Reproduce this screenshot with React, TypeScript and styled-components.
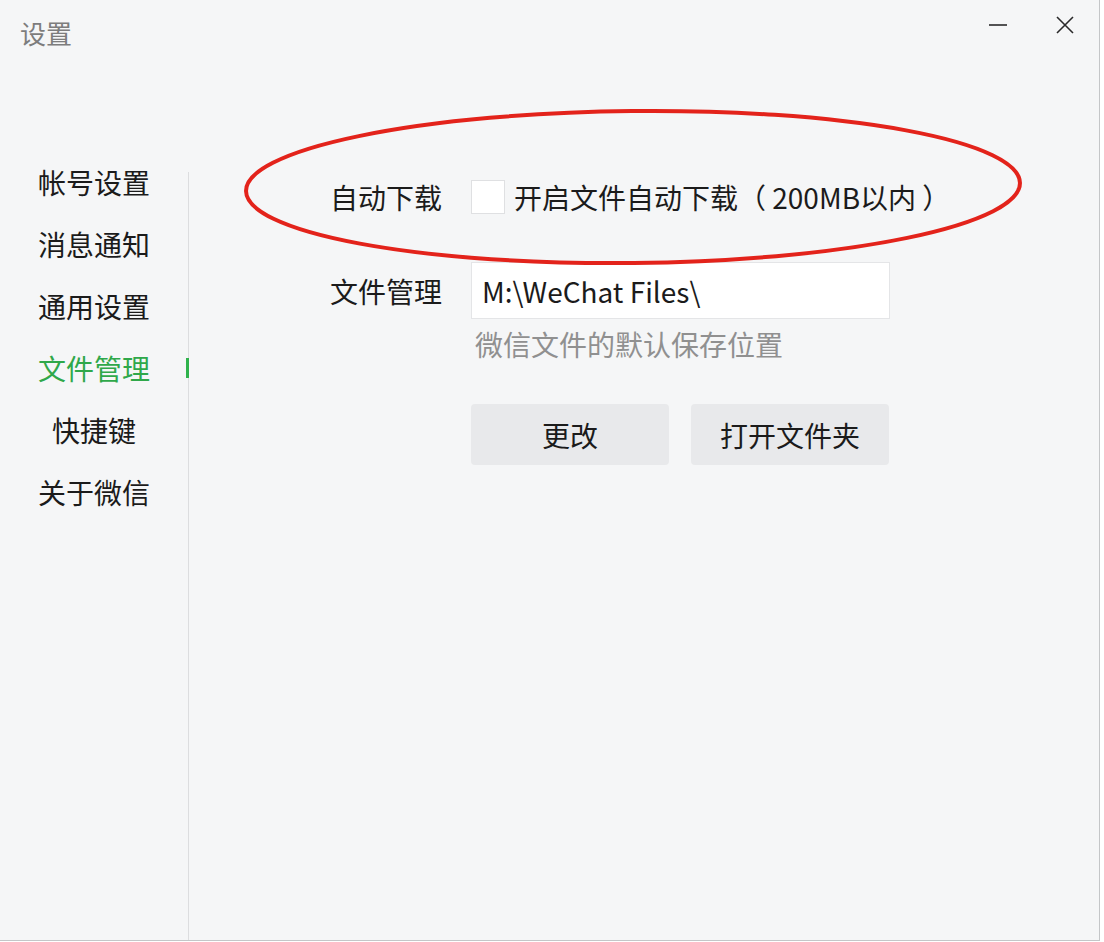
import React from "react";
import styled, { createGlobalStyle } from "styled-components";

const GlobalStyle = createGlobalStyle`
  html, body {
    margin: 0;
    padding: 0;
    background: #ffffff;
  }
  body {
    font-family: "Noto Sans CJK SC", "Noto Sans", sans-serif;
  }
`;

const Window = styled.div`
  position: relative;
  width: 1099px;
  height: 940px;
  background: #f5f6f7;
  border-right: 1px solid #c4c6c8;
  border-bottom: 1px solid #c4c6c8;
  display: flex;
  flex-direction: column;
  overflow: hidden;
`;

const TitleBar = styled.div`
  height: 151px;
  display: flex;
  justify-content: space-between;
  align-items: flex-start;
  flex-shrink: 0;
`;

const Title = styled.div`
  margin: 20px 0 0 20px;
  font-size: 26px;
  line-height: 26px;
  color: #7d7d7d;
`;

const Controls = styled.div`
  display: flex;
  align-items: center;
  gap: 35px;
  margin: 9px 18px 0 0;
`;

const ControlButton = styled.div`
  width: 32px;
  height: 32px;
  display: flex;
  align-items: center;
  justify-content: center;
`;

const Body = styled.div`
  flex: 1;
  display: flex;
`;

const Sidebar = styled.div`
  width: 188px;
  display: flex;
  flex-direction: column;
`;

const Divider = styled.div`
  width: 1px;
  margin-top: 21px;
  background: #dcdddf;
`;

const NavItem = styled.div<{ active?: boolean }>`
  position: relative;
  height: 62px;
  line-height: 62px;
  text-align: center;
  font-size: 28px;
  color: ${(p) => (p.active ? "#2fa84a" : "#1b1b1b")};

  &::after {
    content: "";
    display: ${(p) => (p.active ? "block" : "none")};
    position: absolute;
    right: -1px;
    top: 21px;
    width: 3px;
    height: 20px;
    background: #2fb24c;
  }
`;

const Content = styled.div`
  flex: 1;
  padding: 29px 0 0 141px;
  display: flex;
  flex-direction: column;
`;

const Row = styled.div<{ top?: number }>`
  display: flex;
  align-items: center;
  margin-top: ${(p) => p.top ?? 0}px;
`;

const Label = styled.div`
  width: 112px;
  margin-right: 29px;
  text-align: right;
  font-size: 28px;
  line-height: 34px;
  color: #1b1b1b;
  white-space: nowrap;
`;

const CheckBox = styled.div`
  width: 34px;
  height: 34px;
  box-sizing: border-box;
  background: #ffffff;
  border: 1px solid #dfe0e2;
  margin-right: 9px;
`;

const CheckText = styled.div`
  font-size: 28px;
  line-height: 34px;
  color: #1b1b1b;
  white-space: pre;
`;

const PathInput = styled.div`
  width: 419px;
  height: 57px;
  box-sizing: border-box;
  background: #ffffff;
  border: 1px solid #e4e5e7;
  padding-left: 10px;
  display: flex;
  align-items: center;
  font-size: 28px;
  color: #1b1b1b;
`;

const Hint = styled.div`
  margin: 10px 0 0 145px;
  font-size: 28px;
  line-height: 30px;
  color: #909090;
`;

const Buttons = styled.div`
  display: flex;
  gap: 22px;
  margin: 45px 0 0 141px;
`;

const Button = styled.div`
  width: 198px;
  height: 61px;
  border-radius: 4px;
  background: #e8e9eb;
  display: flex;
  align-items: center;
  justify-content: center;
  font-size: 28px;
  color: #1b1b1b;
`;

const Annotation = styled.svg`
  position: absolute;
  left: 0;
  top: 0;
  pointer-events: none;
`;

const navItems = ["帐号设置", "消息通知", "通用设置", "文件管理", "快捷键", "关于微信"];

export default function App() {
  return (
    <>
      <GlobalStyle />
      <Window>
        <TitleBar>
          <Title>设置</Title>
          <Controls>
            <ControlButton>
              <svg width="18" height="18" viewBox="0 0 18 18">
                <line x1="0" y1="9" x2="18" y2="9" stroke="#2a2a2a" strokeWidth="1.6" />
              </svg>
            </ControlButton>
            <ControlButton>
              <svg width="18" height="18" viewBox="0 0 18 18">
                <path d="M1 1 L17 17 M17 1 L1 17" stroke="#2a2a2a" strokeWidth="1.6" fill="none" />
              </svg>
            </ControlButton>
          </Controls>
        </TitleBar>
        <Body>
          <Sidebar>
            {navItems.map((item) => (
              <NavItem key={item} active={item === "文件管理"}>
                {item}
              </NavItem>
            ))}
          </Sidebar>
          <Divider />
          <Content>
            <Row>
              <Label>自动下载</Label>
              <CheckBox />
              <CheckText>开启文件自动下载（ 200MB以内 ）</CheckText>
            </Row>
            <Row top={48}>
              <Label>文件管理</Label>
              <PathInput>M:\WeChat Files\</PathInput>
            </Row>
            <Hint>微信文件的默认保存位置</Hint>
            <Buttons>
              <Button>更改</Button>
              <Button>打开文件夹</Button>
            </Buttons>
          </Content>
        </Body>
        <Annotation width="1099" height="940">
          <ellipse
            cx="633"
            cy="187"
            rx="387"
            ry="76"
            fill="none"
            stroke="#e3231b"
            strokeWidth="4"
            transform="rotate(-0.6 633 187)"
          />
        </Annotation>
      </Window>
    </>
  );
}
